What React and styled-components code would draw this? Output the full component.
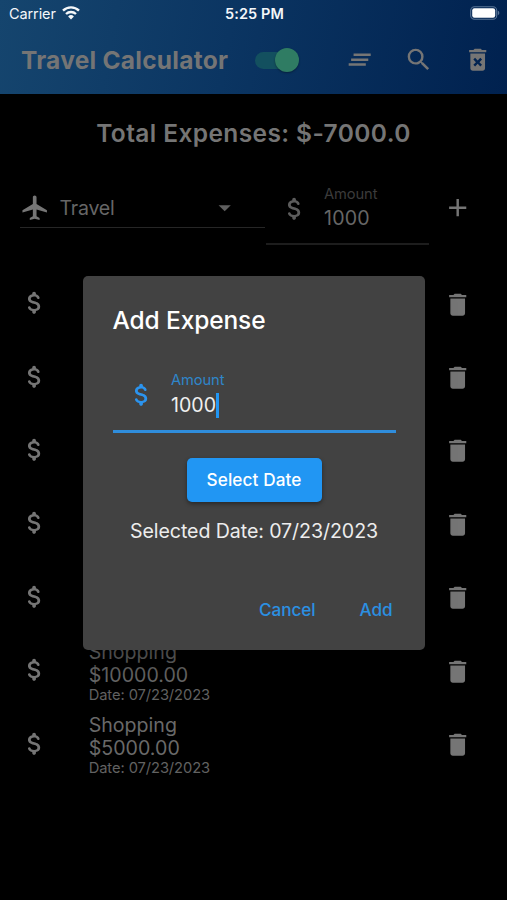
import React from "react";
import styled, { createGlobalStyle } from "styled-components";
import {
  MdAdd,
  MdAirplanemodeActive,
  MdArrowDropDown,
  MdClearAll,
  MdDelete,
  MdDeleteForever,
  MdSearch,
} from "react-icons/md";

const GlobalStyle = createGlobalStyle`
  *, *::before, *::after { box-sizing: border-box; }
  body { margin: 0; background: #000; }
  button { font: inherit; letter-spacing: inherit; border: 0; padding: 0; background: none; color: inherit; }
  svg { display: block; flex: none; }
`;

const Screen = styled.div`
  position: relative;
  width: 507px;
  height: 900px;
  overflow: hidden;
  background: #000;
  color: #757575;
  font-family: Inter, "Liberation Sans", sans-serif;
`;

const Text = styled.span`
  display: block;
  white-space: nowrap;
  font-size: ${(p) => p.$size}px;
  line-height: ${(p) => p.$line}px;
  font-weight: ${(p) => p.$weight || 400};
  letter-spacing: ${(p) => p.$track || 0}px;
  color: ${(p) => p.$color || "inherit"};
`;

const Header = styled.header`
  height: 94px;
  background: linear-gradient(100deg, #15456e 0%, #0b3562 45%, #00214f 100%);
`;

const StatusBar = styled.div`
  display: grid;
  grid-template-columns: 1fr auto 1fr;
  align-items: center;
  height: 27px;
  padding: 0 7px 0 9px;
  color: #f4f7fa;
`;

const Carrier = styled.div`
  display: flex;
  align-items: center;
  gap: 6px;
`;

const WifiIcon = styled.svg`
  margin-top: -2px;
`;

const BatteryIcon = styled.svg`
  justify-self: end;
  margin-top: -1px;
`;

const Toolbar = styled.div`
  display: flex;
  align-items: center;
  height: 66px;
  padding: 0 15px 0 21px;
`;

const AppTitle = styled.div`
  width: 234px;
`;

const Switch = styled.button`
  display: flex;
  align-items: center;
  justify-content: flex-end;
  width: 41px;
  height: 17px;
  border-radius: 9px;
  background: #13505f;
`;

const Knob = styled.span`
  width: 24px;
  height: 24px;
  margin-right: -3px;
  flex: none;
  border-radius: 50%;
  background: #2f7c63;
  box-shadow: 0 1px 2px rgba(0, 0, 0, 0.35);
`;

const Actions = styled.div`
  display: flex;
  gap: 29.4px;
  margin-left: auto;
`;

const Total = styled.div`
  display: flex;
  justify-content: center;
  padding-top: 19px;
  height: 91px;
`;

const EntryForm = styled.div`
  display: flex;
  height: 88px;
  padding-left: 20px;
`;

const CategorySelect = styled.div`
  display: flex;
  align-items: center;
  width: 245px;
  height: 43px;
  padding: 4px 26px 0 0;
  border-bottom: 1px solid #262626;
`;

const CategoryName = styled.div`
  flex: 1;
  padding-left: 10px;
`;

const AmountInput = styled.div`
  display: flex;
  width: 163px;
  height: 60px;
  margin-left: 1px;
  padding-left: 13.5px;
  border-bottom: 2px solid #1d1d1d;
`;

const InputIcon = styled.div`
  display: flex;
  padding-top: ${(p) => p.$top}px;
  width: ${(p) => p.$width}px;
  color: ${(p) => p.$color};
`;

const InputBody = styled.div`
  display: flex;
  flex-direction: column;
`;

const AddSlot = styled.div`
  padding: 8px 0 0 14px;
`;

const List = styled.ul`
  margin: 0;
  padding: 0.7px 0 0;
  list-style: none;
`;

const Row = styled.li`
  display: flex;
  height: 73.4px;
  padding: 14.5px 34.5px 0 20px;
`;

const RowText = styled.div`
  flex: 1;
  margin: -14.5px 0 0 39.3px;
`;

const TrashSlot = styled.div`
  padding-top: 1.5px;
`;

const Dialog = styled.section`
  position: absolute;
  left: 83px;
  top: 276px;
  width: 342px;
  height: 373.5px;
  padding: 29px 29.5px 0 29.5px;
  border-radius: 5px;
  background: #424242;
  color: #fff;
  box-shadow: 0 14px 30px rgba(0, 0, 0, 0.4);
`;

const DialogField = styled.div`
  display: flex;
  height: 65px;
  margin-top: 32.5px;
  padding-left: 14px;
  border-bottom: 3px solid #2f8ddc;
`;

const ValueLine = styled.div`
  display: flex;
  align-items: center;
`;

const Caret = styled.span`
  width: 3px;
  height: 25px;
  background: #2196f3;
`;

const DateButton = styled.button`
  display: flex;
  align-items: center;
  justify-content: center;
  width: 135px;
  height: 44px;
  margin: 25.5px 0 0 74px;
  border-radius: 5px;
  background: #2196f3;
  box-shadow: 0 2px 4px rgba(0, 0, 0, 0.4);
`;

const SelectedDate = styled.div`
  display: flex;
  justify-content: center;
  padding-top: 17px;
`;

const DialogActions = styled.div`
  display: flex;
  justify-content: flex-end;
  gap: 44px;
  padding: 55px 3px 0 0;
  color: #2b90e2;
`;

const expenses = [
  {},
  {},
  {},
  {},
  {},
  { name: "Shopping", amount: "$10000.00", date: "07/23/2023" },
  { name: "Shopping", amount: "$5000.00", date: "07/23/2023" },
];

const ICON = 29.4;

function MoneyIcon() {
  return (
    <svg width={ICON} height={ICON} viewBox="0 0 24 24" fill="currentColor">
      <path d="M11.8 10.9c-2.27-.59-3-1.2-3-2.15 0-1.09 1.01-1.85 2.7-1.85 1.42 0 2.13.54 2.39 1.4.12.4.45.7.87.7h.3c.66 0 1.13-.65.9-1.27-.42-1.18-1.4-2.16-2.96-2.54V4.5c0-.83-.67-1.5-1.5-1.5S10 3.67 10 4.5v.66c-1.94.42-3.5 1.68-3.5 3.61 0 2.31 1.91 3.46 4.7 4.13 2.5.6 3 1.48 3 2.41 0 .69-.49 1.79-2.7 1.79-1.65 0-2.5-.59-2.83-1.43-.15-.39-.49-.67-.9-.67h-.28c-.67 0-1.14.68-.89 1.3.57 1.39 1.9 2.21 3.4 2.53v.67c0 .83.67 1.5 1.5 1.5s1.5-.67 1.5-1.5v-.65c1.95-.37 3.5-1.5 3.5-3.55 0-2.84-2.43-3.81-4.7-4.4z" />
    </svg>
  );
}

function ExpenseRow({ name, amount, date }) {
  return (
    <Row>
      <MoneyIcon />
      <RowText>
        {name && (
          <>
            <Text $size={19.6} $line={23} $color="#696969">{name}</Text>
            <Text $size={19.6} $line={23} $track={0.02} $color="#696969">{amount}</Text>
            <Text $size={14.7} $line={17} $track={-0.08} $color="#626262">Date: {date}</Text>
          </>
        )}
      </RowText>
      <TrashSlot>
        <MdDelete size={ICON} />
      </TrashSlot>
    </Row>
  );
}

export default function App() {
  return (
    <Screen>
      <GlobalStyle />
      <Header>
        <StatusBar>
          <Carrier>
            <Text $size={14.5} $line={27} $track={-0.1}>Carrier</Text>
            <WifiIcon width="18" height="14" viewBox="0 0 18 14" fill="none" stroke="currentColor">
              <path d="M1 4.7a11.4 11.4 0 0 1 16 0" strokeWidth="2.4" />
              <path d="M4 8a7.2 7.2 0 0 1 10 0" strokeWidth="2.3" />
              <path d="M9 13.5 6.1 10.4a4.3 4.3 0 0 1 5.8 0z" fill="currentColor" stroke="none" />
            </WifiIcon>
          </Carrier>
          <Text $size={14.5} $line={27} $weight={600} $track={0.1}>5:25 PM</Text>
          <BatteryIcon width="30" height="14" viewBox="0 0 30 14">
            <rect x="0.7" y="0.7" width="26" height="12.6" rx="3.8" fill="none" stroke="#5a7597" strokeWidth="1.1" />
            <rect x="2.2" y="2.2" width="23" height="9.6" rx="2.2" fill="#fff" />
            <path d="M27.8 4.8c2 .6 2 3.8 0 4.4z" fill="#5a7597" />
          </BatteryIcon>
        </StatusBar>
        <Toolbar>
          <AppTitle>
            <Text $size={24.5} $line={29} $weight={700} $track={0.25}>Travel Calculator</Text>
          </AppTitle>
          <Switch aria-label="Theme">
            <Knob />
          </Switch>
          <Actions>
            <MdClearAll size={ICON} />
            <MdSearch size={ICON} />
            <MdDeleteForever size={ICON} />
          </Actions>
        </Toolbar>
      </Header>

      <Total>
        <Text $size={24.5} $line={40} $weight={600} $track={0.4}>Total Expenses: $-7000.0</Text>
      </Total>

      <EntryForm>
        <CategorySelect>
          <MdAirplanemodeActive size={ICON} />
          <CategoryName>
            <Text $size={19.6} $line={28} $track={-0.2} $color="#666">Travel</Text>
          </CategoryName>
          <MdArrowDropDown size={ICON} color="#5f5f5f" />
        </CategorySelect>
        <AmountInput>
          <InputIcon $top={9} $width={44.5} $color="#5c5c5c">
            <MoneyIcon />
          </InputIcon>
          <InputBody>
            <Text $size={14.7} $line={18} $track={-0.1} $color="#3b3b3b">Amount</Text>
            <Text $size={19.6} $line={30} $track={0.2} $color="#666">1000</Text>
          </InputBody>
        </AmountInput>
        <AddSlot>
          <MdAdd size={ICON} />
        </AddSlot>
      </EntryForm>

      <List>
        {expenses.map((expense, i) => (
          <ExpenseRow key={i} {...expense} />
        ))}
      </List>

      <Dialog role="dialog" aria-label="Add Expense">
        <Text $size={24.5} $line={30} $weight={500} $track={-0.12}>Add Expense</Text>
        <DialogField>
          <InputIcon $top={12.5} $width={44.5} $color="#2b94ef">
            <MoneyIcon />
          </InputIcon>
          <InputBody>
            <Text $size={14.7} $line={25} $track={-0.1} $color="#2f86ca">Amount</Text>
            <ValueLine>
              <Text $size={19.6} $line={25} $color="#efefef">1000</Text>
              <Caret />
            </ValueLine>
          </InputBody>
        </DialogField>
        <DateButton>
          <Text $size={17.15} $line={24} $weight={500} $track={0.12}>Select Date</Text>
        </DateButton>
        <SelectedDate>
          <Text $size={19.6} $line={24} $track={-0.08} $color="#ededed">Selected Date: 07/23/2023</Text>
        </SelectedDate>
        <DialogActions>
          <button>
            <Text $size={17.15} $line={24} $weight={500} $track={-0.05}>Cancel</Text>
          </button>
          <button>
            <Text $size={17.15} $line={24} $weight={500} $track={-0.1}>Add</Text>
          </button>
        </DialogActions>
      </Dialog>
    </Screen>
  );
}
